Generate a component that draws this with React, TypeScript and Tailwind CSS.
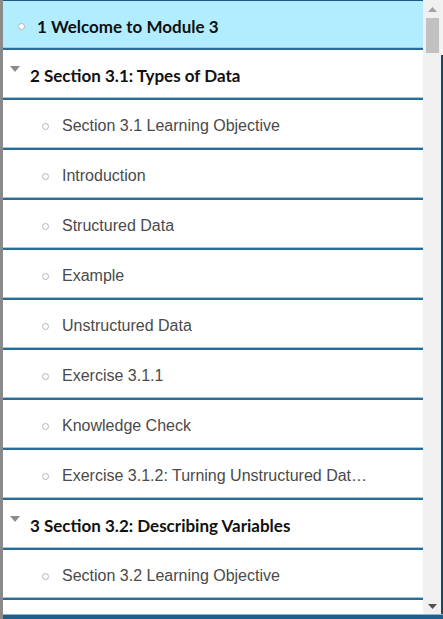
import React from 'react';

type Item = { kind: 'top' | 'section' | 'page'; label: string; active?: boolean };

const ITEMS: Item[] = [
  { kind: 'top', label: '1 Welcome to Module 3', active: true },
  { kind: 'section', label: '2 Section 3.1: Types of Data' },
  { kind: 'page', label: 'Section 3.1 Learning Objective' },
  { kind: 'page', label: 'Introduction' },
  { kind: 'page', label: 'Structured Data' },
  { kind: 'page', label: 'Example' },
  { kind: 'page', label: 'Unstructured Data' },
  { kind: 'page', label: 'Exercise 3.1.1' },
  { kind: 'page', label: 'Knowledge Check' },
  { kind: 'page', label: 'Exercise 3.1.2: Turning Unstructured Data into Structured Data' },
  { kind: 'section', label: '3 Section 3.2: Describing Variables' },
  { kind: 'page', label: 'Section 3.2 Learning Objective' },
];

const Bullet = () => (
  <span className="inline-block w-[7px] h-[7px] rounded-full border border-[#b5b5b5] bg-white shrink-0" />
);

const Caret = () => (
  <svg width="10" height="7" viewBox="0 0 10 7" className="shrink-0">
    <path d="M0 0 H10 L5 6 Z" fill="#8c8c8c" />
  </svg>
);

const Row: React.FC<{ item: Item; first?: boolean }> = ({ item, first }) => {
  const base =
    'flex items-center min-w-0 border-b-2 border-[#2a6c99] shadow-[inset_0_-1px_0_#a9c6da] ' +
    (first ? 'h-[49px] pt-[4px]' : 'h-[50px] pt-[4px]');

  if (item.kind === 'top') {
    return (
      <div className={base + ' bg-[#b2ecff] pl-[15px]'}>
        <Bullet />
        <span className="ml-[12px] font-['Lato',sans-serif] font-bold text-[17px] text-[#111]">
          {item.label}
        </span>
      </div>
    );
  }
  if (item.kind === 'section') {
    return (
      <div className={base + ' bg-white pl-[7px]'}>
        <span className="-mt-[14px]">
          <Caret />
        </span>
        <span className="ml-[10px] font-['Lato',sans-serif] font-bold text-[17px] text-[#111]">
          {item.label}
        </span>
      </div>
    );
  }
  return (
    <div className={base + ' bg-white pl-[39px] pr-[48px]'}>
      <Bullet />
      <span className="ml-[13px] min-w-0 truncate font-['Liberation_Sans',Arial,sans-serif] text-[16px] text-[#4a4a4a]">
        {item.label}
      </span>
    </div>
  );
};

const Scrollbar = () => (
  <div className="w-[18px] shrink-0 bg-[#f0f0f0] flex flex-col items-center">
    <svg width="9" height="6" viewBox="0 0 9 6" className="mt-[7px]">
      <path d="M0 5 L4.5 0 L9 5 Z" fill="#a3a3a3" />
    </svg>
    <div className="mt-[5px] w-[13px] h-[35px] bg-[#c1c1c1]" />
    <div className="flex-1" />
    <svg width="9" height="6" viewBox="0 0 9 6" className="mb-[4px]">
      <path d="M0 0 L9 0 L4.5 5 Z" fill="#505050" />
    </svg>
  </div>
);

export default function App() {
  return (
    <div className="w-[443px] h-[619px] flex bg-white overflow-hidden">
      <div className="w-[3px] shrink-0 bg-[#8a8a8a]" />
      <div className="flex-1 min-w-0 flex flex-col">
        <div className="flex-1 flex min-h-0">
          <div className="flex-1 min-w-0 flex flex-col border-t border-[#1e5b84] overflow-hidden">
            {ITEMS.map((item, i) => (
              <Row key={i} item={item} first={i === 0} />
            ))}
          </div>
          <Scrollbar />
          <div className="w-[2px] shrink-0 flex flex-col">
            <div className="h-[55px] bg-[#f4f4f4]" />
            <div className="flex-1 bg-[#1b4868]" />
          </div>
        </div>
        <div className="h-[5px] bg-[#1f5e8c] border-t border-[#8fb3cc]" />
      </div>
    </div>
  );
}
